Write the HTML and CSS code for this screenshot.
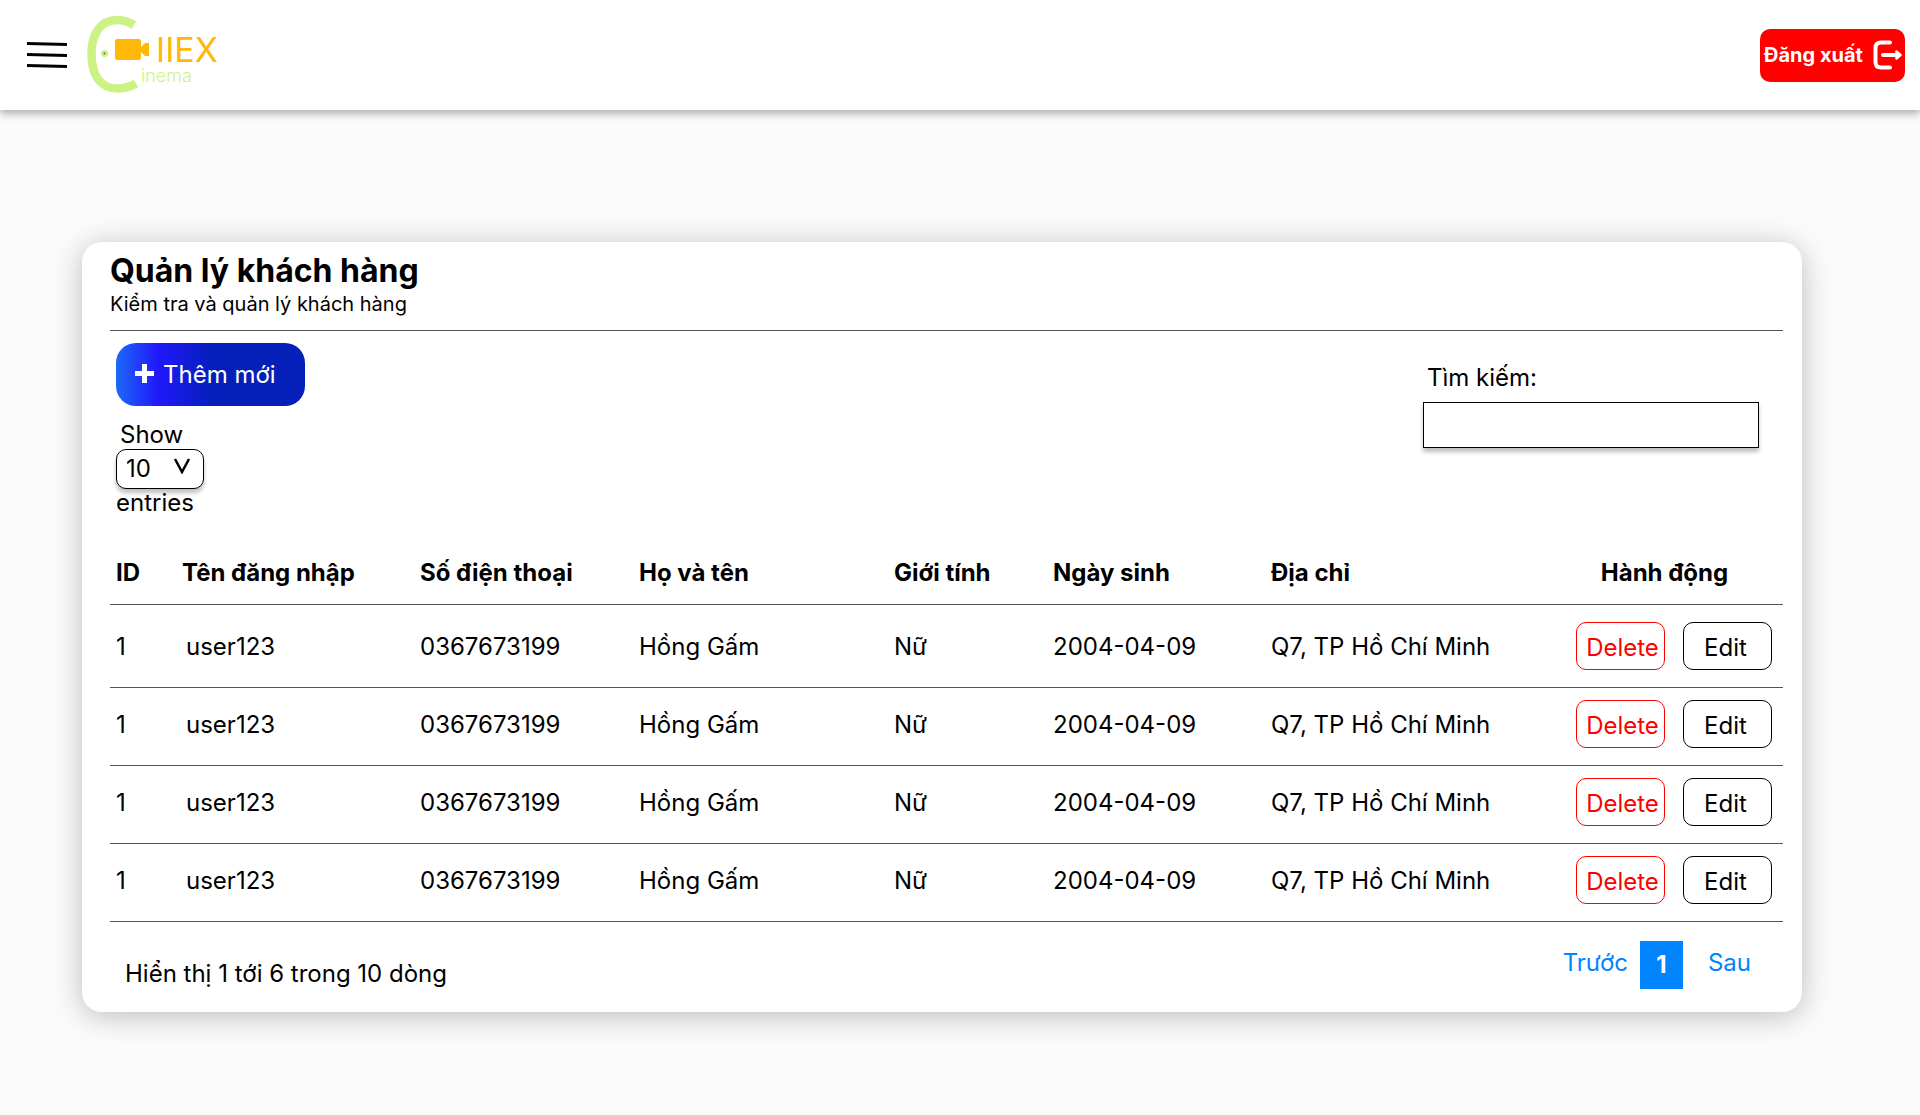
FILE: index.html
```html
<!DOCTYPE html>
<html lang="vi">
<head>
<meta charset="utf-8">
<meta name="viewport" content="width=device-width, initial-scale=1">
<title>Quản lý khách hàng</title>
<link rel="stylesheet" href="styles.css">
</head>
<body>
<header class="topbar">
  <button class="menu" type="button" aria-label="Menu">
    <svg width="40" height="28" viewBox="0 0 40 28" fill="none" stroke="#000" stroke-width="3"><path d="M0 2.5 40 3.5M0 13.5 40 14.5M0 24.5 40 25.5"/></svg>
  </button>
  <a class="logo" href="#" aria-label="CIIEX Cinema">
    <svg width="134" height="80" viewBox="0 0 134 80">
      <path d="M47 10C42 7 37 5 30 5C13.500 5 4.500 19 4.500 39C4.500 60 13.500 73.500 30 73.500C38 73.500 43 72 49 68.500" fill="none" stroke="#cdf284" stroke-width="8.500"/>
      <circle cx="17.500" cy="38.500" r="3.500" fill="#cdf284"/>
      <circle cx="17.500" cy="38.500" r="1" fill="#3f6fa8"/>
      <rect x="28" y="24" width="26" height="21" rx="2" fill="#ffb70a"/>
      <path d="M53 33 58 28H62V41H58L53 36Z" fill="#ffb70a"/>
      <text class="logo-name" x="69" y="47">IIEX</text>
      <text class="logo-sub" x="54" y="67">inema</text>
    </svg>
  </a>
  <button class="logout" type="button">Đăng xuất
    <svg width="29" height="30" viewBox="0 0 29 30" fill="none" stroke="#fff" stroke-width="4" stroke-linecap="round"><path d="M17 2.500H8Q2.500 2.500 2.500 8V22Q2.500 27.500 8 27.500H17M10 15H22"/><path d="M23.500 11.500 27.500 15 23.500 18.500Z" fill="#fff" stroke-width="2.500" stroke-linejoin="round"/></svg>
  </button>
</header>

<main class="card">
  <div class="card-head">
    <h1>Quản lý khách hàng</h1>
    <p>Kiểm tra và quản lý khách hàng</p>
  </div>

  <div class="toolbar">
    <div class="tools">
      <button class="add" type="button">
        <svg width="19" height="22" viewBox="0 0 19 22" stroke="#fff" stroke-width="5"><path d="M9.500 0V19M0 9.500H19"/></svg>
        Thêm mới
      </button>
      <label class="show" for="page-size">Show</label>
      <div class="select-box">
        <select id="page-size"><option>10</option><option>25</option><option>50</option></select>
        <svg width="18" height="16" viewBox="0 0 18 16" fill="none" stroke="#000" stroke-width="2.500"><path d="M2 1 9 14 16 1"/></svg>
      </div>
      <span>entries</span>
    </div>
    <div class="search">
      <label for="search">Tìm kiếm:</label>
      <input id="search" type="text">
    </div>
  </div>

  <table class="customers">
    <colgroup><col class="c-id"><col class="c-user"><col class="c-phone"><col class="c-name"><col class="c-sex"><col class="c-birth"><col><col class="c-actions"></colgroup>
    <thead>
      <tr><th>ID</th><th>Tên đăng nhập</th><th>Số điện thoại</th><th>Họ và tên</th><th>Giới tính</th><th>Ngày sinh</th><th>Địa chỉ</th><th class="actions-head">Hành động</th></tr>
    </thead>
    <tbody>
      <tr><td>1</td><td class="user">user123</td><td>0367673199</td><td>Hồng Gấm</td><td>Nữ</td><td>2004-04-09</td><td>Q7, TP Hồ Chí Minh</td><td><div class="actions"><button class="delete" type="button">Delete</button><button type="button">Edit</button></div></td></tr>
      <tr><td>1</td><td class="user">user123</td><td>0367673199</td><td>Hồng Gấm</td><td>Nữ</td><td>2004-04-09</td><td>Q7, TP Hồ Chí Minh</td><td><div class="actions"><button class="delete" type="button">Delete</button><button type="button">Edit</button></div></td></tr>
      <tr><td>1</td><td class="user">user123</td><td>0367673199</td><td>Hồng Gấm</td><td>Nữ</td><td>2004-04-09</td><td>Q7, TP Hồ Chí Minh</td><td><div class="actions"><button class="delete" type="button">Delete</button><button type="button">Edit</button></div></td></tr>
      <tr><td>1</td><td class="user">user123</td><td>0367673199</td><td>Hồng Gấm</td><td>Nữ</td><td>2004-04-09</td><td>Q7, TP Hồ Chí Minh</td><td><div class="actions"><button class="delete" type="button">Delete</button><button type="button">Edit</button></div></td></tr>
    </tbody>
  </table>

  <div class="card-foot">
    <p>Hiển thị 1 tới 6 trong 10 dòng</p>
    <nav class="pager" aria-label="Phân trang">
      <a href="#">Trước</a>
      <a class="current" href="#" aria-current="page">1</a>
      <a href="#">Sau</a>
    </nav>
  </div>
</main>
</body>
</html>
```

FILE: styles.css
```css
* { box-sizing: border-box; }

body {
  margin: 0;
  background: #fbfbfb;
  color: #000;
  font: 24px/28px Inter, "Liberation Sans", sans-serif;
}

button, input, select { font: inherit; color: inherit; }
button { cursor: pointer; }
svg { display: block; flex: none; }
h1, p { margin: 0; }

.topbar {
  display: flex;
  align-items: center;
  height: 110px;
  padding: 0 15px 0 27px;
  background: #fff;
  box-shadow: 0 4px 8px rgba(0, 0, 0, 0.3);
}

.menu { padding: 0; border: 0; background: none; }
.logo { margin-left: 20px; }
.logo-name { font-size: 34px; fill: #ffb70a; }
.logo-sub { font-size: 18px; font-weight: 300; fill: #cdf284; }

.logout {
  display: flex;
  align-items: center;
  justify-content: space-between;
  width: 145px;
  height: 53px;
  margin-left: auto;
  padding: 0 3px 0 4px;
  border: 0;
  border-radius: 10px;
  background: #f00;
  color: #fff;
  font-size: 20px;
  font-weight: 700;
  white-space: nowrap;
}

.card {
  margin: 132px 118px 40px 82px;
  padding: 9px 19px 23px 28px;
  border-radius: 20px;
  background: #fff;
  box-shadow: 0 4px 30px rgba(0, 0, 0, 0.25);
}

.card-head { padding-bottom: 13px; border-bottom: 1px solid #555; }
.card-head h1 { font-size: 32px; line-height: 40px; font-weight: 700; }
.card-head p { font-size: 20px; line-height: 26px; }

.toolbar {
  display: flex;
  justify-content: space-between;
  padding: 12px 24px 25px 6px;
}

.tools { display: flex; flex-direction: column; align-items: flex-start; }

.add {
  display: flex;
  align-items: center;
  gap: 9px;
  width: 189px;
  height: 63px;
  padding: 0 19px;
  border: 0;
  border-radius: 20px;
  background: linear-gradient(90deg, #1d69f6, #2119fb 22%, #0420b8 52%);
  color: #fff;
  white-space: nowrap;
}

.show { margin: 15px 0 0 4px; }

.select-box { position: relative; }
.select-box select {
  display: block;
  width: 88px;
  height: 40px;
  padding: 0 9px;
  border: 1px solid #000;
  border-radius: 10px;
  background: #fff;
  box-shadow: 0 4px 4px rgba(0, 0, 0, 0.25);
  appearance: none;
}
.select-box svg { position: absolute; top: 9px; right: 13px; pointer-events: none; }

.search { display: flex; flex-direction: column; gap: 10px; width: 336px; margin-top: 21px; }
.search label { padding-left: 4px; }
.search input {
  width: 100%;
  height: 46px;
  padding: 0 10px;
  border: 1px solid #000;
  border-radius: 0;
  background: #fff;
  box-shadow: 0 4px 4px rgba(0, 0, 0, 0.25);
}

.customers { width: 100%; border-collapse: separate; border-spacing: 0; table-layout: fixed; }
.c-id { width: 66px; }
.c-user { width: 238px; }
.c-phone { width: 219px; }
.c-name { width: 255px; }
.c-sex { width: 159px; }
.c-birth { width: 218px; }
.c-actions { width: 213px; }

.customers th {
  padding: 17px 0 17px 6px;
  border-bottom: 1px solid #555;
  font-weight: 700;
  text-align: left;
  white-space: nowrap;
}
.customers .actions-head { padding-right: 30px; text-align: center; }
.customers td {
  padding: 12px 0 15px 6px;
  border-bottom: 1px solid #555;
  line-height: 50px;
  white-space: nowrap;
  vertical-align: top;
}
.customers tbody tr:first-child td { padding-top: 17px; }
.customers .user { padding-left: 10px; }

.actions { display: flex; gap: 18px; }
.actions button {
  width: 89px;
  height: 48px;
  padding: 0 4px 4px 0;
  border: 1px solid #000;
  border-radius: 10px;
  background: #fff;
}
.actions .delete { padding: 0 0 0 4px; border-color: #f00; color: #f00; }

.card-foot {
  display: flex;
  align-items: flex-end;
  justify-content: space-between;
  padding: 19px 32px 0 15px;
}
.card-foot p { line-height: 30px; }

.pager { display: flex; align-items: flex-start; }
.pager a { color: #0085ff; line-height: 44px; text-decoration: none; }
.pager .current {
  width: 43px;
  margin: 0 25px 0 12px;
  background: #0085ff;
  color: #fff;
  font-weight: 700;
  line-height: 48px;
  text-align: center;
}
```
